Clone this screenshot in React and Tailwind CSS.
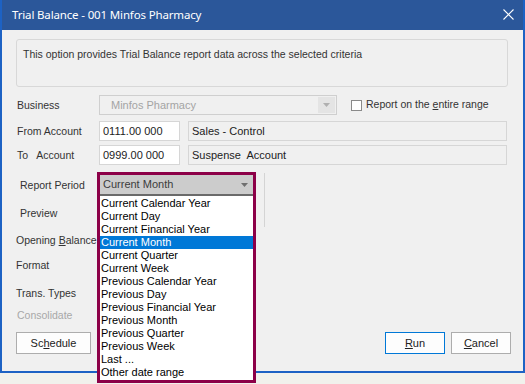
import React from "react";

const periods = [
  "Current Calendar Year",
  "Current Day",
  "Current Financial Year",
  "Current Month",
  "Current Quarter",
  "Current Week",
  "Previous Calendar Year",
  "Previous Day",
  "Previous Financial Year",
  "Previous Month",
  "Previous Quarter",
  "Previous Week",
  "Last ...",
  "Other date range",
];

const Arrow = ({ color = "#7a7a7a" }) => (
  <svg width="7" height="4" viewBox="0 0 7 4">
    <path d="M0 0h7L3.5 4z" fill={color} />
  </svg>
);

const Label = ({ children, className = "" }) => (
  <div className={"w-[82px] shrink-0 text-[10.5px] text-[#333] whitespace-pre " + className}>
    {children}
  </div>
);

const App = () => {
  const selected = "Current Month";

  return (
    <div className="relative w-[525px] h-[384px] overflow-hidden bg-[#f1f1ec] font-['Liberation_Sans',sans-serif]">
      {/* window */}
      <div className="w-[525px] h-[373px] flex flex-col border-x-2 border-b-2 border-[#1d62c4] bg-[#2b579a]">
        <div className="h-[30px] shrink-0 flex items-center justify-between pl-[10px] pr-[9px]">
          <span className="text-white text-[11.5px] font-['Noto_Sans',sans-serif] tracking-[-0.15px]">
            Trial Balance - 001 Minfos Pharmacy
          </span>
          <svg width="11" height="11" viewBox="0 0 11 11" className="mb-[2px]">
            <path d="M0.5 0.5L10.5 10.5M10.5 0.5L0.5 10.5" stroke="white" strokeWidth="1.1" />
          </svg>
        </div>

        <div className="relative flex-1 bg-[#f0f0f0] flex flex-col">
          <div className="mt-[9px] ml-[14px] w-[492px] h-[48px] rounded-[3px] border border-[#d8d8d8] pl-[6px] pt-[7px] text-[10.5px] text-[#333]">
            This option provides Trial Balance report data across the selected criteria
          </div>

          {/* Business */}
          <div className="mt-[8px] ml-[15px] flex items-center h-[20px]">
            <Label className="pt-[1px]">Business</Label>
            <div className="w-[238px] h-[20px] border border-[#cfcfcf] bg-[#f0f0f0] flex items-center justify-between pl-[11px] pr-[1px]">
              <span className="text-[11px] text-[#a4a4a4]">Minfos Pharmacy</span>
              <div className="w-[17px] h-[16px] bg-[#e4e4e4] flex items-center justify-center">
                <Arrow color="#b0b0b0" />
              </div>
            </div>
            <div className="ml-[14px] flex items-center gap-[4px]">
              <div className="w-[11px] h-[11px] border border-[#8a8a8a] bg-white" />
              <span className="text-[10.5px] text-[#333]">
                Report on the <span className="underline">e</span>ntire range
              </span>
            </div>
          </div>

          {/* From Account */}
          <div className="mt-[6px] ml-[15px] flex items-center h-[20px]">
            <Label className="pt-[1px]">From Account</Label>
            <div className="w-[81px] h-[20px] border border-[#d6d6d6] bg-white flex items-center pl-[3px] text-[11px] text-[#222]">
              0111.00 000
            </div>
            <div className="ml-[8px] w-[319px] h-[20px] border border-[#d6d6d6] bg-[#f0f0f0] flex items-center pl-[3px] text-[11px] text-[#222]">
              Sales - Control
            </div>
          </div>

          {/* To Account */}
          <div className="mt-[4px] ml-[15px] flex items-center h-[20px]">
            <Label className="pt-[1px]">{"To   Account"}</Label>
            <div className="w-[81px] h-[20px] border border-[#d6d6d6] bg-white flex items-center pl-[3px] text-[11px] text-[#222]">
              0999.00 000
            </div>
            <div className="ml-[8px] w-[319px] h-[20px] border border-[#d6d6d6] bg-[#f0f0f0] flex items-center pl-[3px] text-[11px] text-[#222] whitespace-pre">
              {"Suspense  Account"}
            </div>
          </div>

          {/* Report Period */}
          <div className="mt-[11px] ml-[15px] flex items-center h-[20px]">
            <Label className="pl-[3px]">Report Period</Label>
            <div className="w-[157px] h-[20px]" />
            <div className="ml-[8px] w-px h-[54px] self-start -mt-[3px] bg-[#d4d4d4]" />
          </div>

          <div className="mt-[8px] ml-[15px] flex items-center h-[20px]">
            <Label className="pl-[3px]">Preview</Label>
          </div>

          <div className="mt-[7px] ml-[14px] flex items-center h-[20px]">
            <Label>
              Opening <span className="underline">B</span>alance
            </Label>
          </div>

          <div className="mt-[5px] ml-[14px] flex items-center h-[20px]">
            <Label>Format</Label>
            <div className="w-[158px] h-[21px] border border-[#d6d6d6] bg-white" />
          </div>

          <div className="mt-[7px] ml-[14px] flex items-center h-[20px]">
            <Label className="pt-[1px]">Trans. Types</Label>
            <div className="w-[158px] h-[21px] border border-[#d6d6d6] bg-white" />
          </div>

          <div className="mt-[3px] ml-[15px] flex items-center h-[20px]">
            <Label className="text-[#a8a8a8]">Consolidate</Label>
          </div>

          {/* buttons */}
          <div className="mt-[6px] ml-[14px] mr-[12px] flex items-center">
            <button className="w-[75px] h-[22px] border border-[#adadad] bg-[#fdfdfd] text-[11px] text-[#222]">
              Sc<span className="underline">h</span>edule
            </button>
            <div className="flex-1" />
            <button className="w-[60px] h-[22px] border border-[#0078d7] bg-[#fdfdfd] text-[11px] text-[#222]">
              <span className="underline">R</span>un
            </button>
            <button className="ml-[6px] w-[60px] h-[22px] border border-[#adadad] bg-[#fdfdfd] text-[11px] text-[#222]">
              <span className="underline">C</span>ancel
            </button>
          </div>
        </div>
      </div>

      {/* open dropdown, highlighted */}
      <div className="absolute left-[97px] top-[172px] w-[159px] h-[211px] border-[3px] border-[#8c0048] bg-white flex flex-col">
        <div className="h-[19px] shrink-0 bg-[#cccccc] flex items-center justify-between pl-[3px] pr-[5px]">
          <span className="text-[11px] text-[#3c3c3c]">{selected}</span>
          <Arrow color="#6f6f6f" />
        </div>
        <div className="h-[2px] shrink-0 bg-[#6a6a6a]" />
        <div className="flex flex-col pt-[1px]">
          {periods.map((p) => (
            <div
              key={p}
              className={
                "h-[13px] leading-[13px] pl-[1px] text-[11px] whitespace-nowrap " +
                (p === selected ? "bg-[#0078d7] text-white" : "text-black")
              }
            >
              {p}
            </div>
          ))}
        </div>
      </div>
    </div>
  );
};

export default App;
